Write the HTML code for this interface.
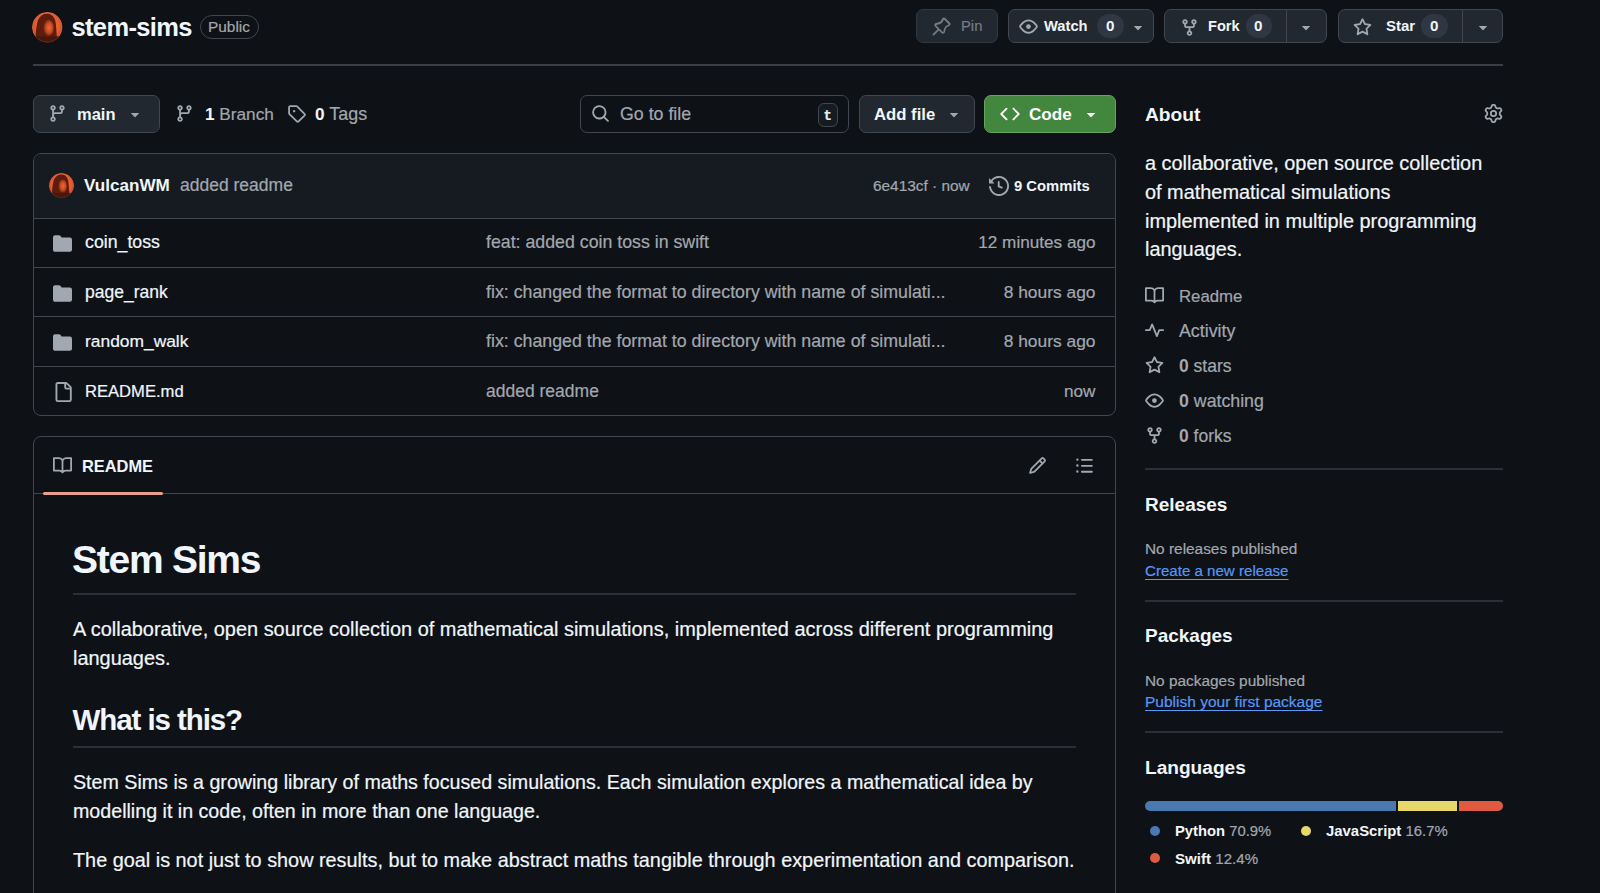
<!DOCTYPE html>
<html><head><meta charset="utf-8">
<style>
html,body{margin:0;padding:0}
body{width:1600px;height:893px;overflow:hidden;background:#0e1116;position:relative;font-family:"Liberation Sans",sans-serif;color:#f0f6fc}
.a{position:absolute}
.t{position:absolute;white-space:nowrap;line-height:1;-webkit-text-stroke:0.2px currentColor}
.b{font-weight:700;-webkit-text-stroke:0}
.m{color:#a2a8af}
svg{position:absolute;fill:#a2a8af}
.btn{position:absolute;box-sizing:border-box;background:#212830;border:1px solid #42474f;border-radius:7px}
.lnk{color:#5598f6;text-decoration:underline;text-underline-offset:3px}
</style></head><body>
<svg style="left:32px;top:12px;width:30.5px;height:30.5px" viewBox="0 0 30 30"><defs><clipPath id="cav1"><circle cx="15" cy="15" r="15"/></clipPath><radialGradient id="av1" cx="50%" cy="45%" r="55%"><stop offset="0" stop-color="#f26a36"/><stop offset="0.7" stop-color="#e65e2e"/><stop offset="1" stop-color="#c84822"/></radialGradient><radialGradient id="hd1" cx="55%" cy="50%" r="55%"><stop offset="0" stop-color="#ee6a34"/><stop offset="0.55" stop-color="#c94b22"/><stop offset="1" stop-color="#6a210e"/></radialGradient></defs>
<g clip-path="url(#cav1)">
<circle cx="15" cy="15" r="15" fill="url(#av1)"/>
<path d="M3 30 C4 21 4 12 6.5 7 C8.5 3.2 12 1.6 15.5 1.8 C19.5 2.2 22 5 23 9 C24 14 24 22 25 30 Z" fill="#5e1c0d"/>
<ellipse cx="16.3" cy="15.5" rx="5.2" ry="8" fill="url(#hd1)"/>
<path d="M0 25 C6 23 10 24 15 24.5 C20 24 25 23 30 25 L30 30 L0 30 Z" fill="#4a150a"/>
</g>
<circle cx="15" cy="15" r="14.6" fill="none" stroke="rgba(190,190,200,0.16)" stroke-width="0.8"/>
</svg>
<div class="t b" style="left:71.5px;top:15.01px;font-size:25.5px;letter-spacing:-0.65px">stem-sims</div>
<div class="a" style="left:200px;top:15px;width:59px;height:24px;box-sizing:border-box;border:1px solid #42474f;border-radius:12px"></div>
<div class="t m" style="left:208px;top:19.01px;font-size:15.4px;">Public</div>
<div class="btn" style="left:916px;top:9px;width:82px;height:34px;border-color:#33383f"></div>
<svg style="left:932px;top:17px;width:19px;height:19px;fill:#767c84;" viewBox="0 0 16 16"><path d="m11.294.984 3.722 3.722a1.75 1.75 0 0 1-.504 2.826l-1.327.613a3.089 3.089 0 0 0-1.707 2.084l-.584 2.454c-.317 1.332-1.972 1.8-2.94.832L5.75 11.311 1.78 15.28a.749.749 0 0 1-1.275-.326.749.749 0 0 1 .215-.734L4.69 10.25 2.487 8.046c-.967-.967-.499-2.622.833-2.94l2.453-.584a3.091 3.091 0 0 0 2.084-1.707l.613-1.327a1.75 1.75 0 0 1 2.826-.504ZM6.106 6.1l-2.453.584a.25.25 0 0 0-.119.42l5.586 5.586a.25.25 0 0 0 .42-.119l.584-2.454a4.591 4.591 0 0 1 2.537-3.098l1.328-.613a.25.25 0 0 0 .072-.404l-3.722-3.722a.25.25 0 0 0-.404.072l-.613 1.328A4.591 4.591 0 0 1 6.106 6.1Z"/></svg>
<div class="t " style="left:961px;top:19.00px;font-size:14.8px;color:#767c84">Pin</div>
<div class="btn" style="left:1008px;top:9px;width:146px;height:34px"></div>
<svg style="left:1019px;top:17px;width:19px;height:19px;" viewBox="0 0 16 16"><path d="M8 2c1.981 0 3.671.992 4.933 2.078 1.27 1.091 2.187 2.345 2.637 3.023a1.62 1.62 0 0 1 0 1.798c-.45.678-1.367 1.932-2.637 3.023C11.67 13.008 9.981 14 8 14c-1.981 0-3.671-.992-4.933-2.078C1.797 10.83.88 9.576.43 8.898a1.62 1.62 0 0 1 0-1.798c.45-.677 1.367-1.931 2.637-3.022C4.33 2.992 6.019 2 8 2ZM1.679 7.932a.12.12 0 0 0 0 .136c.411.622 1.241 1.75 2.366 2.717C5.176 11.758 6.527 12.5 8 12.5c1.473 0 2.825-.742 3.955-1.715 1.124-.967 1.954-2.096 2.366-2.717a.12.12 0 0 0 0-.136c-.412-.621-1.242-1.75-2.366-2.717C10.824 4.242 9.473 3.5 8 3.5c-1.473 0-2.825.742-3.955 1.715-1.124.967-1.954 2.096-2.366 2.717ZM8 10a2 2 0 1 1-.001-3.999A2 2 0 0 1 8 10Z"/></svg>
<div class="t b" style="left:1044px;top:19.01px;font-size:14.7px;">Watch</div>
<div class="a" style="left:1097px;top:14px;width:27px;height:24px;border-radius:12px;background:#2f3742"></div>
<div class="t b" style="left:1106px;top:18.01px;font-size:15.2px;">0</div>
<svg style="left:1129px;top:18px;width:18px;height:18px;" viewBox="0 0 16 16"><path d="m4.427 7.427 3.396 3.396a.25.25 0 0 0 .354 0l3.396-3.396A.25.25 0 0 0 11.396 7H4.604a.25.25 0 0 0-.177.427Z"/></svg>
<div class="btn" style="left:1164px;top:9px;width:163px;height:34px"></div>
<div class="a" style="left:1286px;top:10px;width:1px;height:32px;background:#42474f"></div>
<svg style="left:1179.5px;top:17.5px;width:19px;height:19px;" viewBox="0 0 16 16"><path d="M5 5.372v.878c0 .414.336.75.75.75h4.5a.75.75 0 0 0 .75-.75v-.878a2.25 2.25 0 1 1 1.5 0v.878a2.25 2.25 0 0 1-2.25 2.25h-1.5v2.128a2.251 2.251 0 1 1-1.5 0V8.5h-1.5A2.25 2.25 0 0 1 3.5 6.25v-.878a2.25 2.25 0 1 1 1.5 0ZM5 3.25a.75.75 0 1 0-1.5 0 .75.75 0 0 0 1.5 0Zm6.75.75a.75.75 0 1 0 0-1.5.75.75 0 0 0 0 1.5Zm-3 8.75a.75.75 0 1 0-1.5 0 .75.75 0 0 0 1.5 0Z"/></svg>
<div class="t b" style="left:1208px;top:19.00px;font-size:14.6px;">Fork</div>
<div class="a" style="left:1246px;top:14px;width:26px;height:24px;border-radius:12px;background:#2f3742"></div>
<div class="t b" style="left:1254px;top:18.01px;font-size:15.2px;">0</div>
<svg style="left:1297px;top:18px;width:18px;height:18px;" viewBox="0 0 16 16"><path d="m4.427 7.427 3.396 3.396a.25.25 0 0 0 .354 0l3.396-3.396A.25.25 0 0 0 11.396 7H4.604a.25.25 0 0 0-.177.427Z"/></svg>
<div class="btn" style="left:1338px;top:9px;width:165px;height:34px"></div>
<div class="a" style="left:1462px;top:10px;width:1px;height:32px;background:#42474f"></div>
<svg style="left:1353px;top:17.5px;width:19px;height:19px;" viewBox="0 0 16 16"><path d="M8 .25a.75.75 0 0 1 .673.418l1.882 3.815 4.21.612a.75.75 0 0 1 .416 1.279l-3.046 2.97.719 4.192a.751.751 0 0 1-1.088.791L8 12.347l-3.766 1.98a.75.75 0 0 1-1.088-.79l.72-4.194L.818 6.374a.75.75 0 0 1 .416-1.28l4.21-.611L7.327.668A.75.75 0 0 1 8 .25Zm0 2.445L6.615 5.5a.75.75 0 0 1-.564.41l-3.097.45 2.24 2.184a.75.75 0 0 1 .216.664l-.528 3.084 2.769-1.456a.75.75 0 0 1 .698 0l2.77 1.456-.53-3.084a.75.75 0 0 1 .216-.664l2.24-2.183-3.096-.45a.75.75 0 0 1-.564-.41L8 2.694Z"/></svg>
<div class="t b" style="left:1386px;top:18.01px;font-size:15px;">Star</div>
<div class="a" style="left:1421px;top:14px;width:27px;height:24px;border-radius:12px;background:#2f3742"></div>
<div class="t b" style="left:1430px;top:18.01px;font-size:15.2px;">0</div>
<svg style="left:1474px;top:18px;width:18px;height:18px;" viewBox="0 0 16 16"><path d="m4.427 7.427 3.396 3.396a.25.25 0 0 0 .354 0l3.396-3.396A.25.25 0 0 0 11.396 7H4.604a.25.25 0 0 0-.177.427Z"/></svg>
<div class="a" style="left:33px;top:64px;width:1470px;height:2px;background:#393d44"></div>
<div class="btn" style="left:33px;top:95px;width:127px;height:38px"></div>
<svg style="left:48px;top:104px;width:19px;height:19px;" viewBox="0 0 16 16"><path d="M9.5 3.25a2.25 2.25 0 1 1 3 2.122V6A2.5 2.5 0 0 1 10 8.5H6a1 1 0 0 0-1 1v1.128a2.251 2.251 0 1 1-1.5 0V5.372a2.25 2.25 0 1 1 1.5 0v1.836A2.493 2.493 0 0 1 6 7h4a1 1 0 0 0 1-1v-.628A2.25 2.25 0 0 1 9.5 3.25Zm-6 0a.75.75 0 1 0 1.5 0 .75.75 0 0 0-1.5 0Zm8.25-.75a.75.75 0 1 0 0 1.5.75.75 0 0 0 0-1.5ZM4.25 12a.75.75 0 1 0 0 1.5.75.75 0 0 0 0-1.5Z"/></svg>
<div class="t b" style="left:77px;top:106.00px;font-size:16.5px;">main</div>
<svg style="left:126px;top:105px;width:18px;height:18px;" viewBox="0 0 16 16"><path d="m4.427 7.427 3.396 3.396a.25.25 0 0 0 .354 0l3.396-3.396A.25.25 0 0 0 11.396 7H4.604a.25.25 0 0 0-.177.427Z"/></svg>
<svg style="left:175px;top:104px;width:19px;height:19px;" viewBox="0 0 16 16"><path d="M9.5 3.25a2.25 2.25 0 1 1 3 2.122V6A2.5 2.5 0 0 1 10 8.5H6a1 1 0 0 0-1 1v1.128a2.251 2.251 0 1 1-1.5 0V5.372a2.25 2.25 0 1 1 1.5 0v1.836A2.493 2.493 0 0 1 6 7h4a1 1 0 0 0 1-1v-.628A2.25 2.25 0 0 1 9.5 3.25Zm-6 0a.75.75 0 1 0 1.5 0 .75.75 0 0 0-1.5 0Zm8.25-.75a.75.75 0 1 0 0 1.5.75.75 0 0 0 0-1.5ZM4.25 12a.75.75 0 1 0 0 1.5.75.75 0 0 0 0-1.5Z"/></svg>
<div class="t " style="left:205px;top:106.00px;font-size:17.2px;"><span class="b">1</span> <span class="m">Branch</span></div>
<svg style="left:287px;top:104px;width:19px;height:19px;" viewBox="0 0 16 16"><path d="M1 7.775V2.75C1 1.784 1.784 1 2.750 1h5.025c.464 0 .91.184 1.238.513l6.25 6.25a1.75 1.75 0 0 1 0 2.474l-5.026 5.026a1.75 1.75 0 0 1-2.474 0l-6.25-6.25A1.752 1.752 0 0 1 1 7.775Zm1.5 0c0 .066.026.13.073.177l6.25 6.25a.25.25 0 0 0 .354 0l5.025-5.025a.25.25 0 0 0 0-.354l-6.25-6.25a.25.25 0 0 0-.177-.073H2.75a.25.25 0 0 0-.25.25ZM6 5a1 1 0 1 1 0 2 1 1 0 0 1 0-2Z"/></svg>
<div class="t " style="left:315px;top:106.00px;font-size:17.2px;"><span class="b">0</span> <span class="m" style="font-size:17.9px">Tags</span></div>
<div class="a" style="left:580px;top:95px;width:269px;height:38px;box-sizing:border-box;border:1px solid #42474f;border-radius:7px;background:#0e1116"></div>
<svg style="left:591px;top:104px;width:19px;height:19px;" viewBox="0 0 16 16"><path d="M10.68 11.74a6 6 0 0 1-7.922-8.982 6 6 0 0 1 8.982 7.922l3.04 3.04a.749.749 0 0 1-.326 1.275.749.749 0 0 1-.734-.215ZM11.5 7a4.499 4.499 0 1 0-8.997 0A4.499 4.499 0 0 0 11.5 7Z"/></svg>
<div class="t m" style="left:620px;top:106.01px;font-size:17.8px;">Go to file</div>
<div class="a" style="left:818px;top:103px;width:20px;height:24px;box-sizing:border-box;border:1px solid #42474f;border-radius:6px;background:#151b23"></div>
<div class="t " style="left:823.5px;top:109.01px;font-size:14px;font-family:'Liberation Mono',monospace;font-weight:700;color:#e6edf3">t</div>
<div class="btn" style="left:859px;top:95px;width:116px;height:38px"></div>
<div class="t b" style="left:874px;top:107.00px;font-size:16.7px;">Add file</div>
<svg style="left:945px;top:105px;width:18px;height:18px;" viewBox="0 0 16 16"><path d="m4.427 7.427 3.396 3.396a.25.25 0 0 0 .354 0l3.396-3.396A.25.25 0 0 0 11.396 7H4.604a.25.25 0 0 0-.177.427Z"/></svg>
<div class="btn" style="left:984px;top:95px;width:132px;height:38px;background:#43873e;border-color:#66a461"></div>
<svg style="left:1000px;top:104px;width:20px;height:20px;fill:#fff;" viewBox="0 0 16 16"><path d="m11.28 3.22 4.25 4.25a.75.75 0 0 1 0 1.06l-4.25 4.25a.749.749 0 0 1-1.275-.326.749.749 0 0 1 .215-.734L13.94 8l-3.72-3.72a.749.749 0 0 1 .326-1.275.749.749 0 0 1 .734.215Zm-6.56 0a.751.751 0 0 1 1.042.018.751.751 0 0 1 .018 1.042L2.06 8l3.72 3.72a.749.749 0 0 1-.326 1.275.749.749 0 0 1-.734-.215L.47 8.53a.75.75 0 0 1 0-1.06Z"/></svg>
<div class="t b" style="left:1029px;top:106.01px;font-size:17.1px;color:#fff">Code</div>
<svg style="left:1082px;top:105px;width:18px;height:18px;fill:#fff;" viewBox="0 0 16 16"><path d="m4.427 7.427 3.396 3.396a.25.25 0 0 0 .354 0l3.396-3.396A.25.25 0 0 0 11.396 7H4.604a.25.25 0 0 0-.177.427Z"/></svg>
<div class="a" style="left:33px;top:153px;width:1083px;height:263px;box-sizing:border-box;border:1px solid #42474f;border-radius:8px;overflow:hidden">
<div class="a" style="left:0;top:0;width:1081px;height:64px;background:#161b22;border-bottom:1px solid #42474f"></div>
<div class="a" style="left:0;top:113px;width:1081px;height:1px;background:#42474f"></div>
<div class="a" style="left:0;top:162px;width:1081px;height:1px;background:#42474f"></div>
<div class="a" style="left:0;top:212px;width:1081px;height:1px;background:#42474f"></div>
</div>
<svg style="left:49px;top:173px;width:25px;height:25px" viewBox="0 0 30 30"><defs><clipPath id="cav2"><circle cx="15" cy="15" r="15"/></clipPath><radialGradient id="av2" cx="50%" cy="45%" r="55%"><stop offset="0" stop-color="#f26a36"/><stop offset="0.7" stop-color="#e65e2e"/><stop offset="1" stop-color="#c84822"/></radialGradient><radialGradient id="hd2" cx="55%" cy="50%" r="55%"><stop offset="0" stop-color="#ee6a34"/><stop offset="0.55" stop-color="#c94b22"/><stop offset="1" stop-color="#6a210e"/></radialGradient></defs>
<g clip-path="url(#cav2)">
<circle cx="15" cy="15" r="15" fill="url(#av2)"/>
<path d="M3 30 C4 21 4 12 6.5 7 C8.5 3.2 12 1.6 15.5 1.8 C19.5 2.2 22 5 23 9 C24 14 24 22 25 30 Z" fill="#5e1c0d"/>
<ellipse cx="16.3" cy="15.5" rx="5.2" ry="8" fill="url(#hd2)"/>
<path d="M0 25 C6 23 10 24 15 24.5 C20 24 25 23 30 25 L30 30 L0 30 Z" fill="#4a150a"/>
</g>
<circle cx="15" cy="15" r="14.6" fill="none" stroke="rgba(190,190,200,0.16)" stroke-width="0.8"/>
</svg>
<div class="t b" style="left:84px;top:177.01px;font-size:17.1px;">VulcanWM</div>
<div class="t m" style="left:180px;top:177.00px;font-size:17.5px;">added readme</div>
<div class="t m" style="left:873px;top:178.01px;font-size:15.4px;">6e413cf · now</div>
<svg style="left:989px;top:176px;width:20px;height:20px;" viewBox="0 0 16 16"><path d="m.427 1.927 1.215 1.215a8.002 8.002 0 1 1-1.6 5.685.75.75 0 1 1 1.493-.154 6.5 6.5 0 1 0 1.18-4.458l1.358 1.358A.25.25 0 0 1 3.896 6H.25A.25.25 0 0 1 0 5.75V2.104a.25.25 0 0 1 .427-.177ZM7.75 4a.75.75 0 0 1 .75.75v2.992l2.028.812a.75.75 0 0 1-.557 1.392l-2.5-1A.751.751 0 0 1 7 8.25v-3.5A.75.75 0 0 1 7.75 4Z"/></svg>
<div class="t b" style="left:1014px;top:179.00px;font-size:14.8px;">9 Commits</div>
<svg style="left:53px;top:233.8px;width:19px;height:19px;" viewBox="0 0 16 16"><path d="M1.75 1A1.75 1.75 0 0 0 0 2.75v10.5C0 14.216.784 15 1.75 15h12.5A1.75 1.75 0 0 0 16 13.25v-8.5A1.75 1.75 0 0 0 14.25 3H7.5a.25.25 0 0 1-.2-.1l-.9-1.2C6.07 1.26 5.55 1 5 1H1.75Z"/></svg>
<div class="t " style="left:85px;top:234.01px;font-size:17.75px;">coin_toss</div>
<div class="t m" style="left:486px;top:234.01px;font-size:17.75px;">feat: added coin toss in swift</div>
<div class="t m" style="right:504.5px;top:234.01px;font-size:17.15px;">12 minutes ago</div>
<svg style="left:53px;top:283.8px;width:19px;height:19px;" viewBox="0 0 16 16"><path d="M1.75 1A1.75 1.75 0 0 0 0 2.75v10.5C0 14.216.784 15 1.75 15h12.5A1.75 1.75 0 0 0 16 13.25v-8.5A1.75 1.75 0 0 0 14.25 3H7.5a.25.25 0 0 1-.2-.1l-.9-1.2C6.07 1.26 5.55 1 5 1H1.75Z"/></svg>
<div class="t " style="left:85px;top:284.00px;font-size:17.5px;">page_rank</div>
<div class="t m" style="left:486px;top:284.01px;font-size:17.8px;">fix: changed the format to directory with name of simulati...</div>
<div class="t m" style="right:504.5px;top:284.01px;font-size:17.4px;">8 hours ago</div>
<svg style="left:53px;top:332.8px;width:19px;height:19px;" viewBox="0 0 16 16"><path d="M1.75 1A1.75 1.75 0 0 0 0 2.75v10.5C0 14.216.784 15 1.75 15h12.5A1.75 1.75 0 0 0 16 13.25v-8.5A1.75 1.75 0 0 0 14.25 3H7.5a.25.25 0 0 1-.2-.1l-.9-1.2C6.07 1.26 5.55 1 5 1H1.75Z"/></svg>
<div class="t " style="left:85px;top:333.01px;font-size:17.4px;">random_walk</div>
<div class="t m" style="left:486px;top:333.01px;font-size:17.8px;">fix: changed the format to directory with name of simulati...</div>
<div class="t m" style="right:504.5px;top:333.01px;font-size:17.4px;">8 hours ago</div>
<svg style="left:53px;top:381.5px;width:20px;height:20px;" viewBox="0 0 16 16"><path d="M2 1.75C2 .784 2.784 0 3.75 0h6.586c.464 0 .909.184 1.237.513l2.914 2.914c.329.328.513.773.513 1.237v9.586A1.75 1.75 0 0 1 13.25 16h-9.5A1.75 1.75 0 0 1 2 14.25Zm1.75-.25a.25.25 0 0 0-.25.25v12.5c0 .138.112.25.25.25h9.5a.25.25 0 0 0 .25-.25V6h-2.75A1.75 1.75 0 0 1 9 4.25V1.5Zm6.75.062V4.25c0 .138.112.25.25.25h2.688l-.011-.013-2.914-2.914-.013-.011Z"/></svg>
<div class="t " style="left:85px;top:384.01px;font-size:16.6px;">README.md</div>
<div class="t m" style="left:486px;top:383.00px;font-size:17.5px;">added readme</div>
<div class="t m" style="right:504.5px;top:383.01px;font-size:17.15px;">now</div>
<div class="a" style="left:33px;top:436px;width:1083px;height:520px;box-sizing:border-box;border:1px solid #42474f;border-radius:8px"></div>
<div class="a" style="left:34px;top:493px;width:1081px;height:1px;background:#42474f"></div>
<div class="a" style="left:43px;top:492px;width:120px;height:3px;border-radius:2px;background:#e9a08b"></div>
<svg style="left:53px;top:456px;width:19px;height:19px;" viewBox="0 0 16 16"><path d="M0 1.75A.75.75 0 0 1 .75 1h4.253c1.227 0 2.317.59 3 1.501A3.743 3.743 0 0 1 11.006 1h4.245a.75.75 0 0 1 .75.75v10.5a.75.75 0 0 1-.75.75h-4.507a2.25 2.25 0 0 0-1.591.659l-.622.621a.75.75 0 0 1-1.06 0l-.622-.621A2.25 2.25 0 0 0 5.258 13H.75a.75.75 0 0 1-.75-.75Zm7.251 10.324.004-5.073-.002-2.253A2.25 2.25 0 0 0 5.003 2.5H1.5v9h3.757a3.75 3.75 0 0 1 1.994.574ZM8.755 4.75l-.004 7.322a3.752 3.752 0 0 1 1.992-.572H14.5v-9h-3.495a2.25 2.25 0 0 0-2.25 2.25Z"/></svg>
<div class="t b" style="left:82px;top:458.01px;font-size:16.4px;">README</div>
<svg style="left:1028px;top:456px;width:19px;height:19px;" viewBox="0 0 16 16"><path d="M11.013 1.427a1.75 1.75 0 0 1 2.474 0l1.086 1.086a1.75 1.75 0 0 1 0 2.474l-8.61 8.61c-.21.21-.47.364-.756.445l-3.251.93a.75.75 0 0 1-.927-.928l.929-3.25c.081-.286.235-.547.445-.758l8.61-8.61Zm.176 4.823L9.75 4.81l-6.286 6.287a.253.253 0 0 0-.064.108l-.558 1.953 1.953-.558a.253.253 0 0 0 .108-.064Zm1.238-3.763a.25.25 0 0 0-.354 0L10.811 3.75l1.439 1.44 1.263-1.263a.25.25 0 0 0 0-.354Z"/></svg>
<svg style="left:1075px;top:456px;width:19px;height:19px;" viewBox="0 0 16 16"><path d="M5.75 2.5h8.5a.75.75 0 0 1 0 1.5h-8.5a.75.75 0 0 1 0-1.5Zm0 5h8.5a.75.75 0 0 1 0 1.5h-8.5a.75.75 0 0 1 0-1.5Zm0 5h8.5a.75.75 0 0 1 0 1.5h-8.5a.75.75 0 0 1 0-1.5ZM2 14a1 1 0 1 1 0-2 1 1 0 0 1 0 2Zm1-6a1 1 0 1 1-2 0 1 1 0 0 1 2 0ZM2 4a1 1 0 1 1 0-2 1 1 0 0 1 0 2Z"/></svg>
<div class="t b" style="left:72px;top:540.00px;font-size:39px;letter-spacing:-1.25px">Stem Sims</div>
<div class="a" style="left:73px;top:593px;width:1003px;height:2px;background:#2b3036"></div>
<div class="t " style="left:73px;top:620.00px;font-size:19.95px;">A collaborative, open source collection of mathematical simulations, implemented across different programming</div>
<div class="t " style="left:73px;top:649.00px;font-size:19.95px;">languages.</div>
<div class="t b" style="left:72.5px;top:705.01px;font-size:29.5px;letter-spacing:-1.08px">What is this?</div>
<div class="a" style="left:73px;top:746px;width:1003px;height:2px;background:#2b3036"></div>
<div class="t " style="left:73px;top:773.01px;font-size:19.65px;">Stem Sims is a growing library of maths focused simulations. Each simulation explores a mathematical idea by</div>
<div class="t " style="left:73px;top:802.01px;font-size:19.65px;">modelling it in code, often in more than one language.</div>
<div class="t " style="left:73px;top:851.01px;font-size:19.85px;">The goal is not just to show results, but to make abstract maths tangible through experimentation and comparison.</div>
<div class="t b" style="left:1145px;top:105.00px;font-size:19.2px;">About</div>
<svg style="left:1484px;top:104px;width:19px;height:19px;" viewBox="0 0 16 16"><path d="M8 0a8.2 8.2 0 0 1 .701.031C9.444.095 9.99.645 10.16 1.29l.288 1.107c.018.066.079.158.212.224.231.114.454.243.668.386.123.082.233.09.299.071l1.103-.303c.644-.176 1.392.021 1.82.63.27.385.506.792.704 1.218.315.675.111 1.422-.364 1.891l-.814.806c-.049.048-.098.147-.088.294.016.257.016.515 0 .772-.01.147.038.246.088.294l.814.806c.475.469.679 1.216.364 1.891a7.977 7.977 0 0 1-.704 1.217c-.428.61-1.176.807-1.82.63l-1.102-.302c-.067-.019-.177-.011-.3.071a5.909 5.909 0 0 1-.668.386c-.133.066-.194.158-.211.224l-.29 1.106c-.168.646-.715 1.196-1.458 1.26a8.006 8.006 0 0 1-1.402 0c-.743-.064-1.289-.614-1.458-1.26l-.289-1.106c-.018-.066-.079-.158-.212-.224a5.738 5.738 0 0 1-.668-.386c-.123-.082-.233-.09-.299-.071l-1.103.303c-.644.176-1.392-.021-1.82-.63a8.12 8.12 0 0 1-.704-1.218c-.315-.675-.111-1.422.363-1.891l.815-.806c.05-.048.098-.147.088-.294a6.214 6.214 0 0 1 0-.772c.01-.147-.038-.246-.088-.294l-.815-.806C.635 6.045.431 5.298.746 4.623a7.92 7.92 0 0 1 .704-1.217c.428-.61 1.176-.807 1.82-.63l1.102.302c.067.019.177.011.3-.071.214-.143.437-.272.668-.386.133-.066.194-.158.211-.224l.29-1.106C6.009.645 6.556.095 7.299.03 7.53.01 7.764 0 8 0Zm-.571 1.525c-.036.003-.108.036-.137.146l-.289 1.105c-.147.561-.549.967-.998 1.189-.173.086-.34.183-.5.29-.417.278-.97.423-1.529.27l-1.103-.303c-.109-.03-.175.016-.195.045-.22.312-.412.644-.573.99-.014.031-.021.11.059.19l.815.806c.411.406.562.957.53 1.456a4.709 4.709 0 0 0 0 .582c.032.499-.119 1.05-.53 1.456l-.815.806c-.081.08-.073.159-.059.19.162.346.353.677.573.989.02.03.085.076.195.046l1.102-.303c.56-.153 1.113-.008 1.53.27.161.107.328.204.501.29.447.222.85.629.997 1.189l.289 1.105c.029.109.101.143.137.146a6.6 6.6 0 0 0 1.142 0c.036-.003.108-.036.137-.146l.289-1.105c.147-.561.549-.967.998-1.189.173-.086.34-.183.5-.29.417-.278.97-.423 1.529-.27l1.103.303c.109.029.175-.016.195-.045.22-.313.411-.644.573-.99.014-.031.021-.11-.059-.19l-.815-.806c-.411-.406-.562-.957-.53-1.456a4.709 4.709 0 0 0 0-.582c-.032-.499.119-1.05.53-1.456l.815-.806c.081-.08.073-.159.059-.19a6.464 6.464 0 0 0-.573-.989c-.02-.03-.085-.076-.195-.046l-1.102.303c-.56.153-1.113.008-1.53-.27a4.44 4.44 0 0 0-.501-.29c-.447-.222-.85-.629-.997-1.189l-.289-1.105c-.029-.11-.101-.143-.137-.146a6.6 6.6 0 0 0-1.142 0ZM11 8a3 3 0 1 1-6 0 3 3 0 0 1 6 0ZM9.5 8a1.5 1.5 0 1 0-3.001.001A1.5 1.5 0 0 0 9.5 8Z"/></svg>
<div class="t " style="left:1145px;top:154.01px;font-size:19.9px;">a collaborative, open source collection</div>
<div class="t " style="left:1145px;top:183.01px;font-size:19.9px;">of mathematical simulations</div>
<div class="t " style="left:1145px;top:212.01px;font-size:19.9px;">implemented in multiple programming</div>
<div class="t " style="left:1145px;top:240.01px;font-size:19.9px;">languages.</div>
<svg style="left:1145px;top:286px;width:19px;height:19px;" viewBox="0 0 16 16"><path d="M0 1.75A.75.75 0 0 1 .75 1h4.253c1.227 0 2.317.59 3 1.501A3.743 3.743 0 0 1 11.006 1h4.245a.75.75 0 0 1 .75.75v10.5a.75.75 0 0 1-.75.75h-4.507a2.25 2.25 0 0 0-1.591.659l-.622.621a.75.75 0 0 1-1.06 0l-.622-.621A2.25 2.25 0 0 0 5.258 13H.75a.75.75 0 0 1-.75-.75Zm7.251 10.324.004-5.073-.002-2.253A2.25 2.25 0 0 0 5.003 2.5H1.5v9h3.757a3.75 3.75 0 0 1 1.994.574ZM8.755 4.75l-.004 7.322a3.752 3.752 0 0 1 1.992-.572H14.5v-9h-3.495a2.25 2.25 0 0 0-2.25 2.25Z"/></svg>
<div class="t m" style="left:1179px;top:289.01px;font-size:16.8px;">Readme</div>
<svg style="left:1145px;top:321px;width:19px;height:19px;" viewBox="0 0 16 16"><path d="M6 2c.306 0 .582.187.696.471L10 10.731l1.304-3.26A.751.751 0 0 1 12 7h3.25a.75.75 0 0 1 0 1.5h-2.742l-1.812 4.528a.751.751 0 0 1-1.392 0L6 4.77 4.696 8.03A.75.75 0 0 1 4 8.5H.75a.75.75 0 0 1 0-1.5h2.742l1.812-4.529A.751.751 0 0 1 6 2Z"/></svg>
<div class="t m" style="left:1179px;top:323.01px;font-size:17.8px;">Activity</div>
<svg style="left:1145px;top:356px;width:19px;height:19px;" viewBox="0 0 16 16"><path d="M8 .25a.75.75 0 0 1 .673.418l1.882 3.815 4.21.612a.75.75 0 0 1 .416 1.279l-3.046 2.97.719 4.192a.751.751 0 0 1-1.088.791L8 12.347l-3.766 1.98a.75.75 0 0 1-1.088-.79l.72-4.194L.818 6.374a.75.75 0 0 1 .416-1.28l4.21-.611L7.327.668A.75.75 0 0 1 8 .25Zm0 2.445L6.615 5.5a.75.75 0 0 1-.564.41l-3.097.45 2.24 2.184a.75.75 0 0 1 .216.664l-.528 3.084 2.769-1.456a.75.75 0 0 1 .698 0l2.77 1.456-.53-3.084a.75.75 0 0 1 .216-.664l2.24-2.183-3.096-.45a.75.75 0 0 1-.564-.41L8 2.694Z"/></svg>
<div class="t m" style="left:1179px;top:358.00px;font-size:17.5px;"><span class="b">0</span> stars</div>
<svg style="left:1145px;top:391px;width:19px;height:19px;" viewBox="0 0 16 16"><path d="M8 2c1.981 0 3.671.992 4.933 2.078 1.27 1.091 2.187 2.345 2.637 3.023a1.62 1.62 0 0 1 0 1.798c-.45.678-1.367 1.932-2.637 3.023C11.67 13.008 9.981 14 8 14c-1.981 0-3.671-.992-4.933-2.078C1.797 10.83.88 9.576.43 8.898a1.62 1.62 0 0 1 0-1.798c.45-.677 1.367-1.931 2.637-3.022C4.33 2.992 6.019 2 8 2ZM1.679 7.932a.12.12 0 0 0 0 .136c.411.622 1.241 1.75 2.366 2.717C5.176 11.758 6.527 12.5 8 12.5c1.473 0 2.825-.742 3.955-1.715 1.124-.967 1.954-2.096 2.366-2.717a.12.12 0 0 0 0-.136c-.412-.621-1.242-1.75-2.366-2.717C10.824 4.242 9.473 3.5 8 3.5c-1.473 0-2.825.742-3.955 1.715-1.124.967-1.954 2.096-2.366 2.717ZM8 10a2 2 0 1 1-.001-3.999A2 2 0 0 1 8 10Z"/></svg>
<div class="t m" style="left:1179px;top:393.01px;font-size:17.75px;"><span class="b">0</span> watching</div>
<svg style="left:1145px;top:426px;width:19px;height:19px;" viewBox="0 0 16 16"><path d="M5 5.372v.878c0 .414.336.75.75.75h4.5a.75.75 0 0 0 .75-.75v-.878a2.25 2.25 0 1 1 1.5 0v.878a2.25 2.25 0 0 1-2.25 2.25h-1.5v2.128a2.251 2.251 0 1 1-1.5 0V8.5h-1.5A2.25 2.25 0 0 1 3.5 6.25v-.878a2.25 2.25 0 1 1 1.5 0ZM5 3.25a.75.75 0 1 0-1.5 0 .75.75 0 0 0 1.5 0Zm6.75.75a.75.75 0 1 0 0-1.5.75.75 0 0 0 0 1.5Zm-3 8.75a.75.75 0 1 0-1.5 0 .75.75 0 0 0 1.5 0Z"/></svg>
<div class="t m" style="left:1179px;top:428.00px;font-size:17.5px;"><span class="b">0</span> forks</div>
<div class="a" style="left:1145px;top:468px;width:358px;height:2px;background:#2b3036"></div>
<div class="t b" style="left:1145px;top:495.01px;font-size:19px;">Releases</div>
<div class="t m" style="left:1145px;top:541.01px;font-size:15.4px;">No releases published</div>
<div class="t lnk" style="left:1145px;top:563.00px;font-size:15.1px;">Create a new release</div>
<div class="a" style="left:1145px;top:600px;width:358px;height:2px;background:#2b3036"></div>
<div class="t b" style="left:1145px;top:626.01px;font-size:19px;">Packages</div>
<div class="t m" style="left:1145px;top:673.01px;font-size:15.4px;">No packages published</div>
<div class="t lnk" style="left:1145px;top:694.00px;font-size:15.5px;">Publish your first package</div>
<div class="a" style="left:1145px;top:731px;width:358px;height:2px;background:#2b3036"></div>
<div class="t b" style="left:1145px;top:758.00px;font-size:19.1px;">Languages</div>
<div class="a" style="left:1145px;top:801px;width:358px;height:10px;border-radius:5px;overflow:hidden">
<div class="a" style="left:0;top:0;width:251px;height:10px;background:#4a78b0"></div>
<div class="a" style="left:253px;top:0;width:59px;height:10px;background:#e8d86a"></div>
<div class="a" style="left:314px;top:0;width:44px;height:10px;background:#e05a40"></div>
</div>
<div class="a" style="left:1150px;top:826px;width:10px;height:10px;border-radius:50%;background:#4a78b0"></div>
<div class="a" style="left:1301px;top:826px;width:10px;height:10px;border-radius:50%;background:#e8d86a"></div>
<div class="a" style="left:1150px;top:853px;width:10px;height:10px;border-radius:50%;background:#e05a40"></div>
<div class="t m" style="left:1175px;top:824.00px;font-size:14.8px;"><span class="b" style="color:#f0f6fc">Python</span> 70.9%</div>
<div class="t m" style="left:1326px;top:824.01px;font-size:14.9px;"><span class="b" style="color:#f0f6fc">JavaScript</span> 16.7%</div>
<div class="t m" style="left:1175px;top:851.00px;font-size:15.1px;"><span class="b" style="color:#f0f6fc">Swift</span> 12.4%</div>
</body></html>
